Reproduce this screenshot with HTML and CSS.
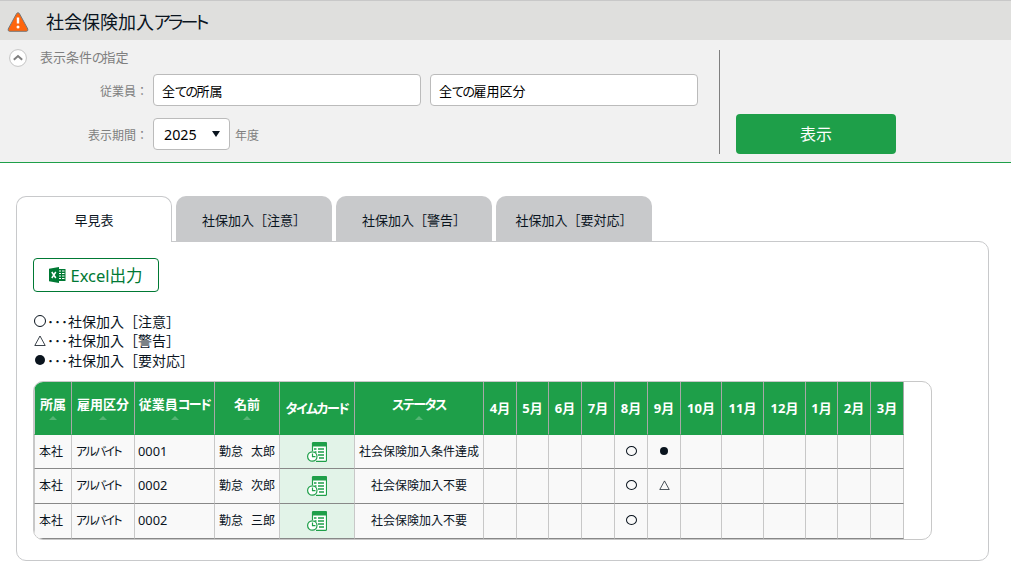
FILE: index.html
```html
<!DOCTYPE html>
<html lang="ja">
<head>
  <meta charset="UTF-8" />
  <meta name="viewport" content="width=device-width, initial-scale=1.0">
  <title>社会保険加入アラート</title>
  <link rel="stylesheet" href="styles.css">
</head>
<body>
  <svg width="0" height="0" class="defs">
    <symbol id="timecard" viewBox="0 0 20 20">
      <path d="M5.500 9V1.600Q5.500.600 6.500.600H18.500Q19.500.600 19.500 1.600V18.400Q19.500 19.400 18.500 19.400H9" fill="#fff" stroke="#1e9f49" stroke-width="1.200"/>
      <path d="M5 4.500V1.500Q5 0 6.500 0H18.500Q20 0 20 1.500V4.500z" fill="#1e9f49"/>
      <path d="M7 7h2.500M11 7h6M7.500 10h2M11 10h6M11 13h6M12 16h5" stroke="#1e9f49" stroke-width="1.500"/>
      <circle cx="5.300" cy="14.500" r="4.700" fill="#fff" stroke="#1e9f49" stroke-width="1.200"/>
      <path d="M5.500 11.500v3.200H8.500" fill="none" stroke="#1e9f49" stroke-width="1.200"/>
    </symbol>
  </svg>

  <header class="title-bar">
    <svg class="alert-icon" width="22" height="20" viewBox="0 0 22 20">
      <path d="M9.700 1.400Q11 0 12.300 1.400L20.800 17Q21.300 19.200 19.500 19.300H2.500Q.7 19.200 1.200 17z" fill="#ff650c" stroke="#777" stroke-width="1"/>
      <path d="M11 5.500v6" stroke="#fff" stroke-width="2.400"/>
      <circle cx="11" cy="15" r="1.500" fill="#fff"/>
    </svg>
    <h1>社会保険加入<span class="kana">アラート</span></h1>
  </header>

  <section class="filter">
    <div class="conditions">
      <div class="filter-head">
        <svg width="18" height="18" viewBox="0 0 18 18">
          <circle cx="9" cy="9" r="8.400" fill="#fff" stroke="#c4c4c4"/>
          <path d="M4.800 10.800L9 7l4.200 3.800" fill="none" stroke="#808080" stroke-width="2"/>
        </svg>
        <span>表示条件<span class="kana">の</span>指定</span>
      </div>
      <div class="field-row">
        <label>従業員：</label>
        <div class="box wide">全<span class="kana">ての</span>所属</div>
        <div class="box wide">全<span class="kana">ての</span>雇用区分</div>
      </div>
      <div class="field-row period">
        <label>表示期間：</label>
        <div class="box year">2025<span class="arrow"></span></div>
        <span class="unit">年度</span>
      </div>
    </div>
    <div class="action">
      <button class="show-btn">表示</button>
    </div>
  </section>

  <main>
    <nav class="tabs">
      <a class="tab active">早見表</a>
      <a class="tab">社保加入［注意］</a>
      <a class="tab">社保加入［警告］</a>
      <a class="tab">社保加入［要対応］</a>
    </nav>
    <div class="panel">
      <button class="excel-btn">
        <svg width="17" height="16" viewBox="0 0 17 16">
          <path d="M9 2h7.500v12H9z" fill="#007934"/>
          <path d="M9.500 4h2.500M13 4h2.500M9.500 6.500h2.500M13 6.500h2.500M9.500 9h2.500M13 9h2.500M9.500 11.500h2.500M13 11.500h2.500" stroke="#fff" stroke-width="1"/>
          <path d="M0 1.800L10 0v16L0 14.200z" fill="#007934"/>
          <path d="M2.800 5l4 6M6.800 5l-4 6" stroke="#fff" stroke-width="1.500"/>
        </svg>
        <span>Excel出力</span>
      </button>

      <ul class="legend">
        <li><i class="mark circle"></i><span class="dots">･･･</span>社保加入［注意］</li>
        <li><i class="mark triangle"><svg width="12" height="11" viewBox="0 0 12 11"><path d="M.8 10.500L6 1l5.200 9.500z"/></svg></i><span class="dots">･･･</span>社保加入［警告］</li>
        <li><i class="mark dot"></i><span class="dots">･･･</span>社保加入［要対応］</li>
      </ul>

      <div class="table-wrap">
        <table>
          <colgroup>
            <col class="w38"><col class="w63"><col class="w80"><col class="w65"><col class="w75"><col class="w129">
            <col class="w33"><col class="w32"><col class="w33"><col class="w33"><col class="w33"><col class="w33">
            <col class="w41"><col class="w42"><col class="w42"><col class="w32"><col class="w33"><col class="w33">
          </colgroup>
          <thead>
            <tr>
              <th class="sort">所属</th>
              <th class="sort">雇用区分</th>
              <th class="sort">従業員<span class="kana">コード</span></th>
              <th class="sort">名前</th>
              <th><span class="kana">タイムカード</span></th>
              <th class="sort"><span class="kana">ステータス</span></th>
              <th>4月</th><th>5月</th><th>6月</th><th>7月</th><th>8月</th><th>9月</th>
              <th>10月</th><th>11月</th><th>12月</th><th>1月</th><th>2月</th><th>3月</th>
            </tr>
          </thead>
          <tbody>
            <tr>
              <td>本社</td>
              <td><span class="kana">アルバイト</span></td>
              <td class="code">0001</td>
              <td class="name">勤怠 太郎</td>
              <td class="card"><svg width="20" height="20"><use href="#timecard"/></svg></td>
              <td class="center">社会保険加入条件達成</td>
              <td></td><td></td><td></td><td></td>
              <td class="center"><i class="mark circle"></i></td>
              <td class="center"><i class="mark dot"></i></td>
              <td></td><td></td><td></td><td></td><td></td><td></td>
            </tr>
            <tr>
              <td>本社</td>
              <td><span class="kana">アルバイト</span></td>
              <td class="code">0002</td>
              <td class="name">勤怠 次郎</td>
              <td class="card"><svg width="20" height="20"><use href="#timecard"/></svg></td>
              <td class="center">社会保険加入不要</td>
              <td></td><td></td><td></td><td></td>
              <td class="center"><i class="mark circle"></i></td>
              <td class="center"><i class="mark triangle"><svg width="11" height="10" viewBox="0 0 12 11"><path d="M.8 10.500L6 1l5.200 9.500z"/></svg></i></td>
              <td></td><td></td><td></td><td></td><td></td><td></td>
            </tr>
            <tr>
              <td>本社</td>
              <td><span class="kana">アルバイト</span></td>
              <td class="code">0002</td>
              <td class="name">勤怠 三郎</td>
              <td class="card"><svg width="20" height="20"><use href="#timecard"/></svg></td>
              <td class="center">社会保険加入不要</td>
              <td></td><td></td><td></td><td></td>
              <td class="center"><i class="mark circle"></i></td>
              <td></td>
              <td></td><td></td><td></td><td></td><td></td><td></td>
            </tr>
          </tbody>
        </table>
      </div>
    </div>
  </main>
</body>
</html>
```
FILE: styles.css
```css
*,
*::before {
  box-sizing: border-box;
}
body {
  margin: 0;
  height: 565px;
  overflow: hidden;
  background: #fff;
  color: #0a141e;
  font-family: "Noto Sans", "Noto Sans CJK JP", sans-serif;
  font-size: 13px;
}
.defs {
  position: absolute;
}
.kana {
  font-feature-settings: "palt";
  letter-spacing: -1px;
}
.title-bar {
  display: flex;
  align-items: center;
  height: 40px;
  padding: 3px 0 0 7px;
  background: #dfdfdd;
  border-top: 1px solid #c8c8c8;
}
.title-bar h1 {
  margin: 0 0 0 17px;
  font-size: 18px;
  font-weight: 400;
  line-height: 26px;
}
.title-bar .kana {
  letter-spacing: -2.9px;
}
.filter {
  display: flex;
  height: 123px;
  background: #f1f1f1;
  border-bottom: 1px solid #1e9f49;
  color: #7f7f7f;
}
.conditions {
  width: 719px;
  padding-top: 9px;
}
.filter-head {
  display: flex;
  align-items: center;
  height: 18px;
  padding-left: 9px;
  gap: 13px;
}
.filter-head > span {
  padding-bottom: 3px;
}
.filter-head .kana {
  letter-spacing: -2px;
}
.field-row {
  display: flex;
  align-items: center;
  margin-top: 7px;
  font-size: 12px;
}
.field-row.period {
  margin-top: 12px;
}
.field-row label {
  width: 148px;
  padding-top: 2px;
  text-align: right;
  margin-right: 5px;
}
.box {
  display: flex;
  align-items: center;
  height: 32px;
  background: #fff;
  border: 1px solid #bbb;
  border-radius: 4px;
  padding: 0 8px;
  color: #000;
}
.box.wide {
  width: 268px;
  margin-right: 9px;
  font-size: 13px;
}
.box.wide .kana {
  letter-spacing: -1.5px;
}
.box.year {
  width: 77px;
  padding: 0 9px 0 10px;
  justify-content: space-between;
  font-size: 14.3px;
}
.arrow {
  border: 4px solid transparent;
  border-top: 6px solid #0a141e;
  border-bottom: 0;
}
.unit {
  margin-left: 5px;
  padding-top: 2px;
}
.action {
  margin: 10px 0 8px;
  padding: 64px 0 0 16px;
  border-left: 1px solid #7f7f7f;
}
button {
  font-family: inherit;
  cursor: pointer;
}
.show-btn {
  display: block;
  width: 160px;
  height: 40px;
  padding: 0 0 2px;
  border: none;
  border-radius: 4px;
  background: #1e9f49;
  color: #fff;
  font-size: 16px;
}
main {
  padding: 33px 22px 0 16px;
}
.tabs {
  display: flex;
  gap: 4px;
}
.tab {
  width: 156px;
  height: 45px;
  padding-top: 3px;
  border-radius: 10px 10px 0 0;
  background: #c8c9cb;
  line-height: 42px;
  text-align: center;
}
.tab.active {
  position: relative;
  height: 46px;
  margin-bottom: -1px;
  padding-top: 2px;
  background: #fff;
  border: 1px solid #c8c9cb;
  border-bottom: 0;
}
.panel {
  height: 320px;
  padding: 16px;
  border: 1px solid #c8c9cb;
  border-radius: 0 10px 10px 10px;
}
.excel-btn {
  display: flex;
  align-items: center;
  justify-content: center;
  gap: 4px;
  width: 126px;
  height: 34px;
  padding: 0;
  background: #fff;
  border: 1px solid #007934;
  border-radius: 4px;
  color: #007934;
  font-size: 16.5px;
}
.legend {
  list-style: none;
  margin: 19px 0 0;
  padding: 0;
  font-size: 14px;
}
.legend li {
  display: flex;
  align-items: center;
  height: 19.5px;
}
.legend .mark {
  width: 14px;
  padding-top: 1px;
}
.dots {
  width: 21px;
}
.mark {
  display: inline-flex;
  align-items: center;
  justify-content: center;
  vertical-align: middle;
}
.mark::before {
  border-radius: 50%;
}
.circle::before {
  content: "";
  width: 11px;
  height: 10px;
  border: 1px solid #0a141e;
}
.dot::before {
  content: "";
  width: 8px;
  height: 8px;
  background: #0a141e;
}
.legend .circle::before {
  width: 12px;
  height: 12px;
}
.legend .dot::before {
  width: 10px;
  height: 10px;
}
.triangle path {
  fill: none;
  stroke: #0a141e;
  stroke-width: .8;
}
.table-wrap {
  width: 899px;
  height: 159px;
  margin-top: 11.5px;
  border: 1px solid #c8c8c8;
  border-radius: 10px;
  overflow: hidden;
}
table {
  width: 870px;
  table-layout: fixed;
  border-collapse: separate;
  border-spacing: 0;
  font-size: 12px;
}
th {
  height: 53px;
  padding: 0 0 2px;
  background: #1e9f49;
  color: #fff;
  border-right: 1px solid #a8a8a8;
  border-bottom: 1px solid #1e9f49;
  font-size: 13px;
  white-space: nowrap;
}
th .kana {
  letter-spacing: -1.4px;
}
th.sort {
  padding: 2px 0 0;
  line-height: 18px;
}
th.sort::after {
  content: "";
  display: block;
  width: 0;
  margin: 3px auto 4px;
  border: 4px solid transparent;
  border-bottom-color: #55b574;
  border-top: 0;
}
td {
  height: 35px;
  padding: 0 4px;
  background: #f9f9f9;
  border-right: 1px solid #c8c8c8;
  border-bottom: 1px solid #888;
  white-space: nowrap;
  line-height: 18px;
}
td .kana {
  letter-spacing: -1.7px;
}
td .mark {
  margin-bottom: 3px;
}
td.code {
  padding: 0 0 2px 3px;
  font-size: 12.8px;
}
td.name {
  word-spacing: 5px;
}
tbody tr:first-child td {
  height: 34px;
}
th:first-child,
td:first-child {
  border-left: 1px solid #c8c8c8;
}
td.center {
  padding: 0;
  text-align: center;
}
td.card {
  background: #e2f3e8;
  padding: 0;
  text-align: center;
}
.card svg {
  display: block;
  margin: 0 auto;
}
.w32 { width: 32px; }
.w33 { width: 33px; }
.w38 { width: 38px; }
.w41 { width: 41px; }
.w42 { width: 42px; }
.w63 { width: 63px; }
.w65 { width: 65px; }
.w75 { width: 75px; }
.w80 { width: 80px; }
.w129 { width: 129px; }
```
